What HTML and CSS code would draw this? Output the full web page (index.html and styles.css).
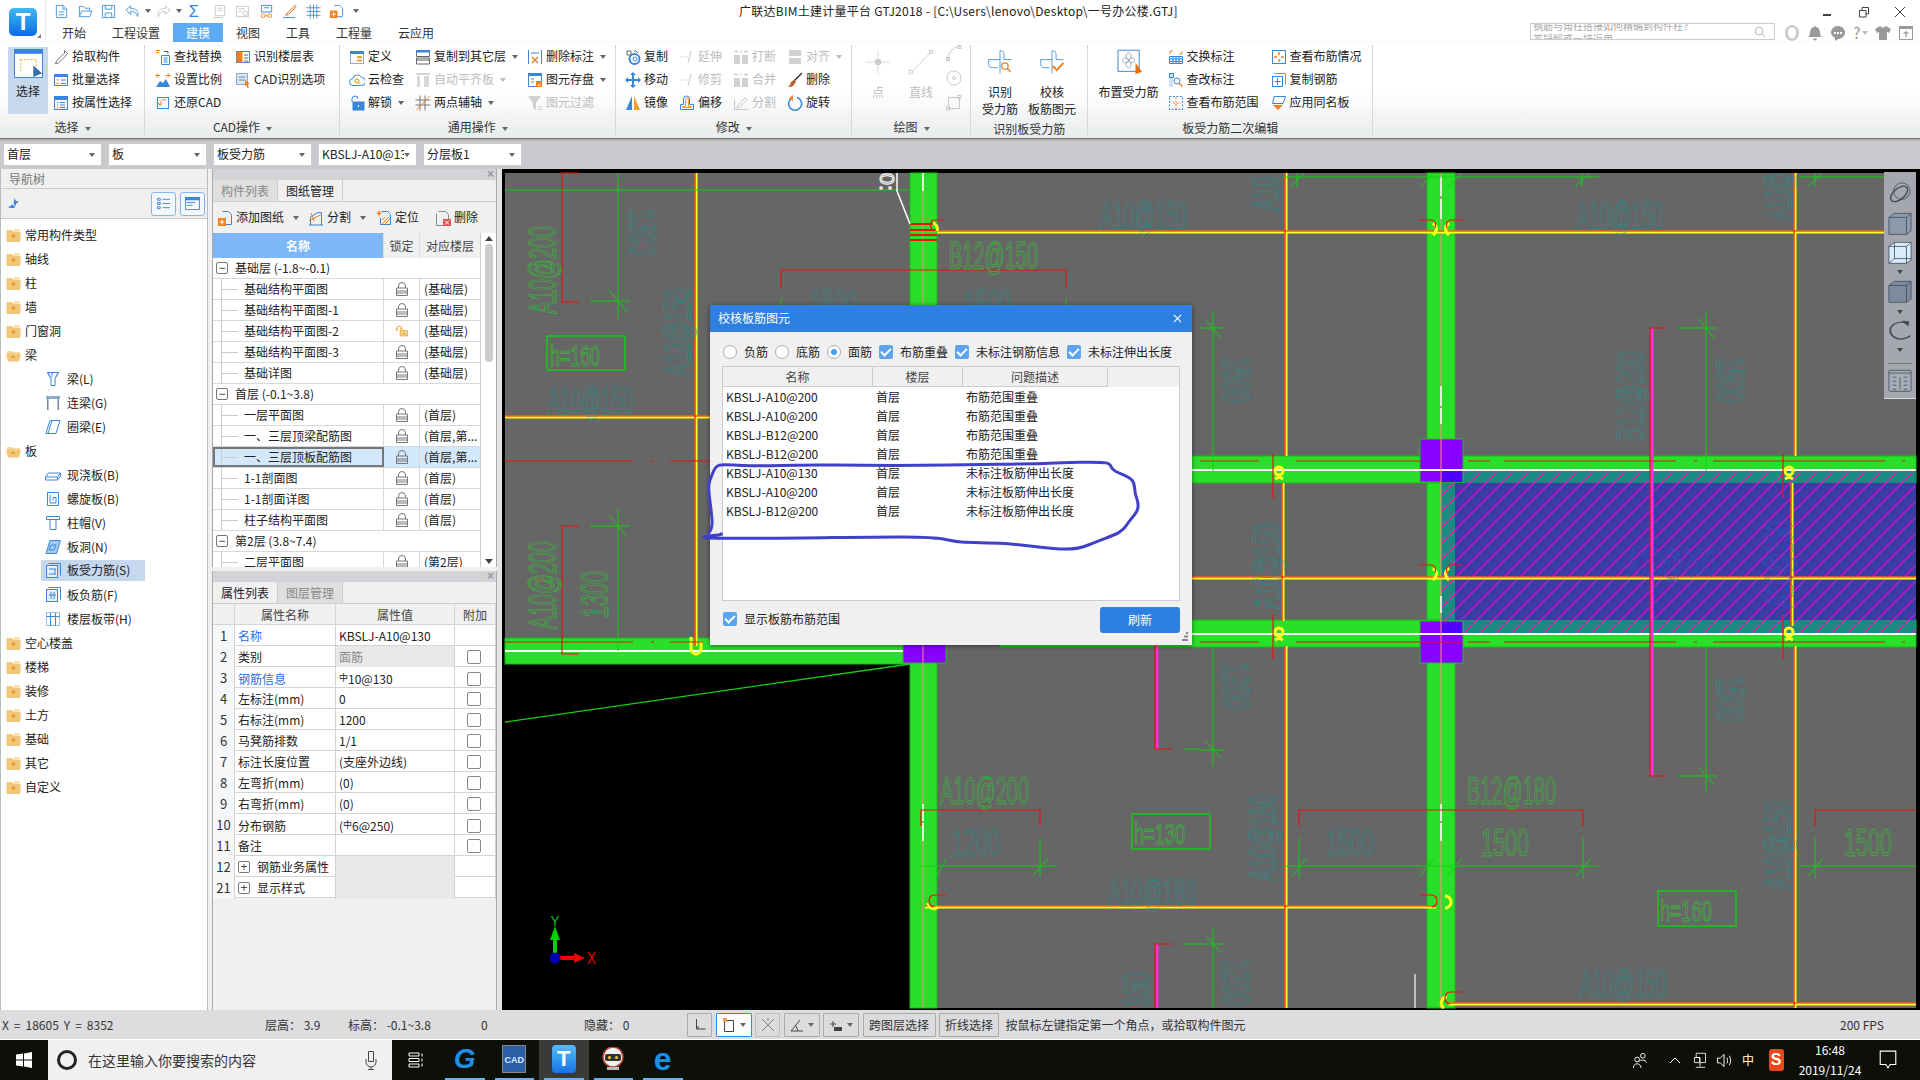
FILE: index.html
```html
<!DOCTYPE html>
<html lang="zh-CN">
<head>
<meta charset="utf-8">
<title>广联达BIM土建计量平台 GTJ2018</title>
<link rel="stylesheet" href="styles.css">
</head>
<body>
<svg class="sprite" xmlns="http://www.w3.org/2000/svg">
  <symbol id="doc" viewBox="0 0 16 16"><path d="M2.500 1.500h7l4 4v9h-11zM9.500 1.500v4h4M5 8.500h6M5 11.500h6"/></symbol>
  <symbol id="folder" viewBox="0 0 16 16"><path d="M1.500 13.500v-11h4l2 2h5v3M1.500 13.500l2.500-6h11l-2.500 6z"/></symbol>
  <symbol id="save" viewBox="0 0 16 16"><path d="M1.500 1.500h13v13h-13zM4.500 1.500v4h7v-4M4.500 14.500v-5h7v5"/></symbol>
  <symbol id="undo" viewBox="0 0 16 16"><path d="M6 2L1 6.500 6 11V8c4 0 6 1 7.500 5.500C15 7.500 12 4.500 6 5z"/></symbol>
  <symbol id="redo" viewBox="0 0 16 16"><path d="M10 2l5 4.500-5 4.500V8c-4 0-6 1-7.500 5.500C1 7.500 4 4.500 10 5z"/></symbol>
  <symbol id="dgdoc" viewBox="0 0 16 16"><path stroke="#c8c8c8" d="M3.500 1.500h10v11h-10zM6 4.500h5M6 7h5M1.500 14.500h10"/></symbol>
  <symbol id="dgfind" viewBox="0 0 16 16"><path stroke="#c8c8c8" d="M1.500 2.500h13v11h-13zM4 5h6M4 8h3"/><circle stroke="#c8c8c8" cx="11" cy="10" r="2.500"/></symbol>
  <symbol id="glass" viewBox="0 0 16 16"><path d="M2.500 1.500h11v7h-11zM5 4h6" stroke="#3a86d8"/><circle cx="4.500" cy="12.500" r="2" stroke="#f08020"/><circle cx="11.500" cy="12.500" r="2" stroke="#f08020"/><path d="M6.500 12.500h3" stroke="#f08020"/></symbol>
  <symbol id="pen" viewBox="0 0 16 16"><path d="M14 1.500L6 9l-2 3 3-1 8-8z" stroke="#e06820"/><path d="M1 14.500h13" stroke="#3a86d8"/></symbol>
  <symbol id="gridq" viewBox="0 0 16 16"><path d="M4.500.500v15M8 .500v15M11.500.500v15M.500 4h15M.500 8h15M.500 12h15"/></symbol>
  <symbol id="docplus" viewBox="0 0 16 16"><path d="M5.500 1.500h6l3 3v9h-6"/><path fill="#f08020" stroke="none" d="M1 7h8v8H1z"/><path stroke="#fff" d="M5 8.500v5M2.500 11h5"/></symbol>
  <symbol id="pick" viewBox="0 0 16 16"><path stroke="#777" d="M11.500 1.500l3 3-1.500 1.500-.5 1-7 7-3 1 1-3 7-7 1-.5z"/></symbol>
  <symbol id="batch" viewBox="0 0 16 16"><rect x="1.500" y="2.500" width="13" height="11"/><path fill="#3a86d8" d="M1.500 2.500h13v2h-13z"/><path stroke="#f08020" d="M3.500 7.500l1 1 1.500-1.500M3.500 11l1 1 1.500-1.500"/><path d="M8 8h5M8 11.500h5"/></symbol>
  <symbol id="attr" viewBox="0 0 16 16"><rect x="1.500" y="1.500" width="13" height="13"/><path fill="#3a86d8" d="M1.500 1.500h13v3h-13z"/><path d="M4 7.500h1M7 7.500h5M4 10h1M7 10h5M4 12.500h1M7 12.500h5"/></symbol>
  <symbol id="findr" viewBox="0 0 16 16"><path stroke="#f08020" d="M1 1.500h4M1 3.500h3"/><path d="M6.500 6.500h8v9h-8zM8.500 9h4M8.500 11h4M8.500 13h4"/><path d="M9 2.500h4v2" stroke="#555"/></symbol>
  <symbol id="scale" viewBox="0 0 16 16"><path stroke="#f08020" d="M1 3.500h4M1 3.500l2-2M1 3.500l2 2M15 3.500h-4M15 3.500l-2-2M15 3.500l-2 2"/><path stroke="none" fill="#3a86d8" d="M1 15l4-6 3 2 3-4 4 8z"/></symbol>
  <symbol id="restore" viewBox="0 0 16 16"><rect x="2.500" y="2.500" width="11" height="11"/><path stroke="#f08020" d="M11 5C7 4 5 6 5 10M3 8l2 2.500L7.500 8"/></symbol>
  <symbol id="floor" viewBox="0 0 16 16"><rect x="1.500" y="2.500" width="13" height="11"/><path fill="#f08020" stroke="#f08020" d="M2 3h5v10H2z"/><path d="M9 6h4M9 9h4M9 12h4" stroke="#666"/></symbol>
  <symbol id="cadopt" viewBox="0 0 16 16"><path stroke="#8aa6c8" fill="#dbe7f5" d="M1.500 1.500h11v11h-11z"/><path stroke="#6b8cb8" d="M3.500 5h7M3.500 8h7"/><path fill="#f08020" stroke="none" d="M10 8l5 4-2.500.500L14 15.500 12.500 16 11 13l-1 1.500z"/></symbol>
  <symbol id="define" viewBox="0 0 16 16"><rect x="1.500" y="2.500" width="13" height="12" stroke="#9ab"/><path fill="#3a86d8" stroke="none" d="M1 2h14v3H1z"/><path fill="#f0a040" stroke="none" d="M8 7h5v2H8zM8 10.500h5v2H8z"/></symbol>
  <symbol id="cloud" viewBox="0 0 16 16"><path d="M4 13.500a3.500 3.500 0 010-7 4.500 4.500 0 018.500-1 3.800 3.800 0 010 8z"/><circle cx="8" cy="9" r="2" stroke="#f08020"/><path d="M9.500 10.500l1.500 1.500" stroke="#f08020"/></symbol>
  <symbol id="unlock" viewBox="0 0 16 16"><path d="M3 7V4a3 3 0 016 0"/><rect x="4" y="7" width="11" height="8" fill="#3a86d8"/><path stroke="#fff" d="M9.500 10v2"/></symbol>
  <symbol id="copylayer" viewBox="0 0 16 16"><path stroke="#666" d="M1.500 1.500h13v6h-13zM1.500 9h13v6h-13z"/><path fill="#3a86d8" stroke="none" d="M1 1h14v2.500H1z"/><path fill="#aaa" stroke="none" d="M2 9.500h12V12H2z"/></symbol>
  <symbol id="dgalign" viewBox="0 0 16 16"><path stroke="none" fill="#d8d8d8" d="M1 1h14v2H1zM2 4h3v11H2zM9 4h5v11H9z"/></symbol>
  <symbol id="twopt" viewBox="0 0 16 16"><path stroke="#777" d="M5 .500v15M10 .500v15M.500 5h15M.500 10h15"/><path stroke="#f08020" d="M1.500 15L14.500 1"/></symbol>
  <symbol id="delmark" viewBox="0 0 16 16"><path stroke="#3a86d8" d="M1.500 1v14M14.500 1v14M4 4h8"/><path stroke="#f08020" stroke-width="1.500" d="M5 8l6 6M11 8l-6 6"/></symbol>
  <symbol id="store" viewBox="0 0 16 16"><path stroke="#3a86d8" d="M1.500 1.500h13v13h-13zM4 7h3M4 10h3"/><path fill="#3a86d8" stroke="none" d="M1 1h14v3H1z"/><path fill="#f08020" stroke="none" d="M9 9h6v6H9z"/><path stroke="#fff" d="M10.500 13h3"/></symbol>
  <symbol id="dgfilter" viewBox="0 0 16 16"><path stroke="none" fill="#d0d0d0" d="M1 1h13L9 8v7l-3-2V8z"/><path stroke="#d0d0d0" d="M11 12h4M11 14.500h4"/></symbol>
  <symbol id="copy" viewBox="0 0 16 16"><circle cx="9.500" cy="10" r="5" stroke="#3a86d8" stroke-width="2"/><circle cx="10" cy="10" r="2" stroke="#3a86d8"/><path d="M2 2h4v4H2zM9 2h2l2 2" stroke="#666"/></symbol>
  <symbol id="move" viewBox="0 0 16 16"><path stroke="none" fill="#3a86d8" d="M8 0l3 3H9v4h4V5l3 3-3 3V9H9v4h2l-3 3-3-3h2V9H3v2L0 8l3-3v2h4V3H5z"/></symbol>
  <symbol id="mirror" viewBox="0 0 16 16"><path stroke="none" fill="#3a86d8" d="M7 1v14H1z"/><path stroke="none" fill="#f0a020" d="M9 1v14h6z"/></symbol>
  <symbol id="dgdash" viewBox="0 0 16 16"><path stroke="#c8c8c8" d="M1 8h1.500M4 8h1.500M7 8h1.500M12 2L9 14"/></symbol>
  <symbol id="dgsplit" viewBox="0 0 16 16"><path stroke="none" fill="#d0d0d0" d="M1 6h6v9H1zM9 6h6v9H9z"/><path stroke="#d0d0d0" d="M3 1v3M8 1v3M13 1v3M1 2.500h4M11 2.500h4"/></symbol>
  <symbol id="dgstack" viewBox="0 0 16 16"><path stroke="none" fill="#d0d0d0" d="M2 1h12v6H2zM2 9h12v6H2z"/></symbol>
  <symbol id="del" viewBox="0 0 16 16"><path stroke="#333" stroke-width="1.500" d="M15 1L7 9"/><path stroke="none" fill="#c06020" d="M7 8l2 2-3 4c-2 1-4 1-5 1 2-1 2-3 3-5z"/></symbol>
  <symbol id="offset" viewBox="0 0 16 16"><path d="M1.500 14.500V9.500h3V4a3 3 0 016 0v5.500h4v5z" stroke="#3a86d8"/><path stroke="#f0a020" d="M3.500 12.500V11.500h3V4.500a1.500 1.500 0 013 0v7h3v1z"/></symbol>
  <symbol id="dgcut" viewBox="0 0 16 16"><path stroke="#c8c8c8" d="M1.500 4.500v10h13M3.500 12.500L12 3l2 2-8 8z"/></symbol>
  <symbol id="rotate" viewBox="0 0 16 16"><path d="M10 2.500a6.500 6.500 0 11-5 .500" stroke="#3a86d8" stroke-width="1.500"/><path stroke="none" fill="#f08020" d="M6 0v6L2 3z"/></symbol>
  <symbol id="dgpoly" viewBox="0 0 16 16"><path stroke="#c8c8c8" d="M2 15C2 8 6 3 14 1"/><rect x="12" y="0.500" width="3" height="3" stroke="#c8c8c8"/><rect x="0.500" y="12.500" width="3" height="3" stroke="#c8c8c8"/></symbol>
  <symbol id="dgcirc" viewBox="0 0 16 16"><circle cx="8" cy="8" r="7" stroke="#c8c8c8"/><circle cx="8" cy="8" r="1.500" stroke="#c8c8c8"/></symbol>
  <symbol id="dgrect" viewBox="0 0 16 16"><path stroke="#c8c8c8" d="M2.500 2.500h11v11h-11z"/><rect x="0.500" y="12" width="3" height="3" stroke="#c8c8c8"/><rect x="12" y="0.500" width="3" height="3" stroke="#c8c8c8"/></symbol>
  <symbol id="swapm" viewBox="0 0 16 16"><path fill="#e8f0fa" d="M1.500 7.500h13v7h-13zM1.500 10h13M1.500 12.500h13M5 7.500v7M8 7.500v7M11 7.500v7"/><path stroke="#f08020" d="M2 5V2h3M14 2v3h-3"/></symbol>
  <symbol id="checkm" viewBox="0 0 16 16"><path fill="#cfe2f7" stroke="none" d="M1 1h4v14H1z"/><rect x="1.500" y="1.500" width="4" height="4"/><circle cx="9" cy="9" r="3"/><path stroke="#f08020" stroke-width="1.500" d="M11 11l3.500 3.500"/></symbol>
  <symbol id="range" viewBox="0 0 16 16"><path stroke-dasharray="2 1.500" d="M1.500 1.500h13v13h-13z"/><path stroke="#f08020" stroke-dasharray="2 1.500" d="M8 2v12M5 8h8"/></symbol>
  <symbol id="viewr" viewBox="0 0 16 16"><rect x="1.500" y="1.500" width="13" height="13"/><path stroke="#f08020" stroke-width="1.500" d="M8 3v3M8 10v3M3 8h3M10 8h3"/></symbol>
  <symbol id="copyr" viewBox="0 0 16 16"><path stroke="#f08020" d="M3.500 1.500h11v11"/><rect x="1.500" y="4.500" width="10" height="10"/><path d="M6.500 6v7M3.500 9.500h6"/></symbol>
  <symbol id="applyb" viewBox="0 0 16 16"><path d="M3 1.500h11.500L12 8.500H1.500z"/><path stroke="none" fill="#f08020" d="M2 10h10l-5 5z"/></symbol>
  <symbol id="nfold" viewBox="0 0 14 13"><path fill="#f2c878" stroke="none" d="M0 2q0-1 1-1h4l1.500 1.500H13q1 0 1 1V12q0 1-1 1H1q-1 0-1-1z"/><path fill="#f8e0a8" stroke="none" d="M7 0h5q1 0 1 1v1H7z"/><path stroke="#e09a30" stroke-width="1.500" d="M5 7h4M7 5v4"/></symbol>
  <symbol id="nopen" viewBox="0 0 16 13"><path fill="#f2d090" stroke="none" d="M1 2h6l1 1h7v2H1z"/><path fill="#f2c878" stroke="none" d="M0 5h16l-2 8H2z"/><path stroke="#d09030" stroke-width="1.500" d="M5.500 8h4"/></symbol>
  <symbol id="sBeam" viewBox="0 0 16 16"><path d="M2.500 1.500h11l-3.500 6v7H6v-7zM2.500 1.500l3.500 6M13.500 1.500l-3.500 6M7 2v4"/></symbol>
  <symbol id="sLink" viewBox="0 0 16 16"><path fill="#8fa9c9" stroke="none" d="M1 1h14v3H1z"/><path stroke="#6f88a8" d="M2.500 4v11M3 4v11M13 4v11M13.500 4v11"/></symbol>
  <symbol id="sRing" viewBox="0 0 16 16"><path d="M5 1.500h10l-4 13H1zM7 1.500l-4 13"/></symbol>
  <symbol id="sSlab" viewBox="0 0 16 16"><path d="M.500 10l3-4h12l-3 4zM.500 10v3h12v-3M12.500 13l3-4V6"/></symbol>
  <symbol id="sSpiral" viewBox="0 0 16 16"><path d="M2.500 1.500h11v13h-11zM5 4v8h6V6.500H8v3"/></symbol>
  <symbol id="sCap" viewBox="0 0 16 16"><path d="M1.500 1.500h13v3h-13zM5 4.500v10h6v-10"/></symbol>
  <symbol id="sHole" viewBox="0 0 16 16"><path fill="#a8c8ee" d="M5 1.500h10.500l-4 13H1zM6 6h5l-2 5H4z"/></symbol>
  <symbol id="sMain" viewBox="0 0 16 16"><rect x="1.500" y="2.500" width="11" height="12" fill="#e2eefa"/><path d="M3.500.500h12v12M4 6h7M10 6v5M4 11h7"/></symbol>
  <symbol id="sNeg" viewBox="0 0 16 16"><rect x="1.500" y="2.500" width="11" height="12" fill="#e2eefa"/><path d="M3.500.500h12v12M4 8h7M6 5v7M9 5v7"/></symbol>
  <symbol id="sBand" viewBox="0 0 16 16"><path stroke-dasharray="1 1" d="M1.500 1.500h13v13h-13z"/><path d="M1.500 5.500h13M5.500 2v13M10.500 2v13"/></symbol>
  <symbol id="lock" viewBox="0 0 12 14"><path stroke="#777" d="M2.500 6V4a3.500 3.500 0 017 0v2M.500 6h11v7.500H.500zM.500 9h11M.500 11h11"/></symbol>
  <symbol id="lockopen" viewBox="0 0 16 14"><path stroke="#f0a030" stroke-width="1.300" d="M1 7V4a3.500 3.500 0 017 0v2M1.500 3v3M6.500 3v3"/><path fill="#f6d27a" stroke="#e0a030" d="M5.500 6.500h10v7h-10z"/><path stroke="#a06020" d="M9.500 10.500h2"/></symbol>
  <symbol id="tadd" viewBox="0 0 16 16"><path stroke="#3a86d8" d="M5.500 1.500h6l3 3v10h-8"/><path fill="#f08020" stroke="none" d="M1 8h8v8H1z"/><path stroke="#fff" d="M5 9.500v5M2.500 12h5"/></symbol>
  <symbol id="tsplit" viewBox="0 0 16 16"><path stroke="#3a86d8" d="M1 15h14M2.500 15V7L10 2.500h3.500V15"/><path stroke="#f08020" d="M1 11l13-7M3 3l3 8"/></symbol>
  <symbol id="tloc" viewBox="0 0 16 16"><path stroke="#3a86d8" d="M5.500 1.500h6l3 3v10h-10V8"/><path fill="#f08020" stroke="none" d="M3 0l1 2.500L6.500 3 4 4 3 7 2 4-.500 3 2 2.500z"/><path stroke="#f08020" d="M6 14l7-7M9 14l5-5M6 10l3-3"/></symbol>
  <symbol id="tdel" viewBox="0 0 16 16"><path stroke="#888" d="M3.500 1.500h7l3 3v10"/><path stroke="#888" d="M1.500 3.500v12h7"/><path fill="#e85050" stroke="none" d="M8 9h8v7H8z"/><path stroke="#fff" d="M10 10.500l4 4M14 10.500l-4 4"/></symbol>
  <symbol id="orbit" viewBox="0 0 26 24"><defs><radialGradient id="ballg" cx=".4" cy=".3"><stop offset="0" stop-color="#fff"/><stop offset="1" stop-color="#6b7685"/></radialGradient></defs><circle cx="15" cy="10" r="9" fill="url(#ballg)" stroke="#4d5867"/><ellipse cx="12" cy="13" rx="11" ry="6" transform="rotate(-40 12 13)" fill="none" stroke="#3f4a59" stroke-width="1.500"/></symbol>
  <symbol id="c3d" viewBox="0 0 26 34" preserveAspectRatio="none"><path fill="#8e99a9" stroke="#3f4a59" d="M1 8l6-6h18v26l-5 5H1z"/><path fill="none" stroke="#3f4a59" d="M1 8h19v25M20 8l5-6"/></symbol>
  <symbol id="cwire" viewBox="0 0 26 34" preserveAspectRatio="none"><path fill="#d8ecfb" stroke="#3f4a59" d="M1 8l6-6h18v26l-5 5H1z"/><path fill="none" stroke="#3f4a59" d="M1 8h19v25M20 8l5-6M7 2v24h18M7 26l-6 7"/></symbol>
  <symbol id="csolid" viewBox="0 0 26 34" preserveAspectRatio="none"><path fill="#7d8b9d" stroke="#3f4a59" d="M1 8l6-6h18v26l-5 5H1z"/><path fill="none" stroke="#3f4a59" d="M1 8h19v25M20 8l5-6"/></symbol>
  <symbol id="crot" viewBox="0 0 26 34" preserveAspectRatio="none"><path fill="none" stroke="#3f4a59" stroke-width="2" d="M20 5A12 13 0 1024 24"/><path fill="#3f4a59" stroke="none" d="M15 1l8 1-1 8z"/></symbol>
  <symbol id="ctable" viewBox="0 0 26 34" preserveAspectRatio="none"><rect x="1" y="2" width="24" height="31" rx="2" fill="#a7aeb8" stroke="#3f4a59"/><path fill="none" stroke="#3f4a59" d="M1 6h24M5 12h4M5 18h4M5 24h4M5 30h4M13 12v18M17 12h4M17 18h4M17 24h4M17 30h4"/></symbol>
</svg>

<div class="app">
  <header class="head">
    <div class="logo-cell"><div class="logo">T</div><i class="logo-corner"></i></div>
    <div class="head-main">
      <div class="qa-row">
        <div class="qa">
          <svg class="qi"><use href="#doc"/></svg>
          <svg class="qi"><use href="#folder"/></svg>
          <svg class="qi"><use href="#save"/></svg>
          <svg class="qi"><use href="#undo"/></svg><i class="caret qc"></i>
          <svg class="qi qd"><use href="#redo"/></svg><i class="caret qc"></i>
          <span class="sigma">Σ</span>
          <svg class="qi"><use href="#dgdoc"/></svg>
          <svg class="qi"><use href="#dgfind"/></svg>
          <svg class="qi"><use href="#glass"/></svg>
          <svg class="qi"><use href="#pen"/></svg>
          <svg class="qi"><use href="#gridq"/></svg>
          <svg class="qi"><use href="#docplus"/></svg><i class="caret qc2"></i>
        </div>
        <div class="app-title">广联达BIM土建计量平台 GTJ2018 - [C:\Users\lenovo\Desktop\一号办公楼.GTJ]</div>
        <div class="winbtns">
          <svg class="wb" viewBox="0 0 12 12"><path d="M1 9h8" stroke-width="2"/></svg>
          <svg class="wb" viewBox="0 0 12 12"><path d="M1.500 4.500h6.500v6.500h-6.500zM4 4.500V1.500h6.500v6.500H8"/></svg>
          <svg class="wb" viewBox="0 0 12 12"><path d="M1 1l10 10M11 1L1 11"/></svg>
        </div>
      </div>
      <div class="tab-row">
        <nav class="tabs">
          <span class="tab">开始</span><span class="tab">工程设置</span><span class="tab on">建模</span><span class="tab">视图</span><span class="tab">工具</span><span class="tab">工程量</span><span class="tab">云应用</span>
        </nav>
        <div class="searchbox">
          <div class="search-txt">钢筋与角柱搭接如何精确到构件柱？<br>答疑解惑一接近用</div>
          <svg class="search-ic" viewBox="0 0 14 14"><circle cx="6" cy="6" r="4.500"/><path d="M9.500 9.500L13 13"/></svg>
        </div>
        <div class="usertools">
          <svg class="ut" viewBox="0 0 16 16"><path fill="#ccc" d="M8 0a6.500 7.500 0 00-7 8c0 4 3 8 7 8s7-4 7-8a6.500 7.500 0 00-7-8z"/><path fill="#fff" d="M8 2.500c-3 0-4 2.500-4 5s1.500 6 4 6 4-3.500 4-6-1-5-4-5z"/></svg>
          <svg class="ut" viewBox="0 0 16 16"><path fill="#999" d="M8 1a1 1 0 011 1c3 .5 4 3 4 6 0 2 1 3 2 4H1c1-1 2-2 2-4 0-3 1-5.500 4-6a1 1 0 011-1zM6 13.500h4a2 2 0 01-4 0z"/></svg>
          <svg class="ut" viewBox="0 0 16 16"><path fill="#999" d="M8 1c4 0 7 3 7 6.500S12 14 8 14l-3 2v-3c-2-1-4-3-4-5.500C1 4 4 1 8 1z"/><path fill="#fff" d="M4 7h2v2H4zM7 7h2v2H7zM10 7h2v2h-2z"/></svg>
          <span class="ut-q">?</span><i class="caret ut-c"></i>
          <svg class="ut" viewBox="0 0 16 16"><path fill="#999" d="M5 1L0 4l2 4 2-1v8h8V7l2 1 2-4-5-3-3 2z"/></svg>
          <svg class="ut" viewBox="0 0 16 16"><path fill="none" stroke="#999" d="M1.500 1.500h13v13h-13z"/><path fill="#999" d="M1 1h14v3H1z"/><path fill="none" stroke="#777" d="M8 12V7M5.500 9L8 6.500 10.500 9"/></svg>
        </div>
      </div>
    </div>
  </header>

  <section class="ribbon">
    <div class="rg g1">
      <div class="rbody">
        <div class="big-select"><svg class="sel-ic" viewBox="0 0 30 30"><rect x=".5" y=".5" width="29" height="29" fill="#fff" stroke="#3a86d8"/><path fill="#3a86d8" d="M0 0h30v5H0z"/><path fill="none" stroke="#f0a040" stroke-dasharray="2 1.500" d="M7 11h16v16"/><path fill="none" stroke="#f0a040" stroke-dasharray="2 1.500" d="M7 11v12"/><path fill="#3a6db0" d="M20 17l9 8-9 4z"/></svg><span>选择</span></div>
        <div class="rc">
          <div class="ri"><svg class="ic"><use href="#pick"/></svg>拾取构件</div>
          <div class="ri"><svg class="ic"><use href="#batch"/></svg>批量选择</div>
          <div class="ri"><svg class="ic"><use href="#attr"/></svg>按属性选择</div>
        </div>
      </div>
      <div class="rlabel">选择<i class="caret"></i></div>
    </div>
    <div class="rg g2">
      <div class="rbody">
        <div class="rc w80">
          <div class="ri"><svg class="ic"><use href="#findr"/></svg>查找替换</div>
          <div class="ri"><svg class="ic"><use href="#scale"/></svg>设置比例</div>
          <div class="ri"><svg class="ic"><use href="#restore"/></svg>还原CAD</div>
        </div>
        <div class="rc">
          <div class="ri"><svg class="ic"><use href="#floor"/></svg>识别楼层表</div>
          <div class="ri"><svg class="ic"><use href="#cadopt"/></svg>CAD识别选项</div>
        </div>
      </div>
      <div class="rlabel">CAD操作<i class="caret"></i></div>
    </div>
    <div class="rg g3">
      <div class="rbody">
        <div class="rc w66">
          <div class="ri"><svg class="ic"><use href="#define"/></svg>定义</div>
          <div class="ri"><svg class="ic"><use href="#cloud"/></svg>云检查</div>
          <div class="ri"><svg class="ic"><use href="#unlock"/></svg>解锁<i class="caret"></i></div>
        </div>
        <div class="rc w112">
          <div class="ri"><svg class="ic"><use href="#copylayer"/></svg>复制到其它层<i class="caret"></i></div>
          <div class="ri dis"><svg class="ic"><use href="#dgalign"/></svg>自动平齐板<i class="caret"></i></div>
          <div class="ri"><svg class="ic"><use href="#twopt"/></svg>两点辅轴<i class="caret"></i></div>
        </div>
        <div class="rc">
          <div class="ri"><svg class="ic"><use href="#delmark"/></svg>删除标注<i class="caret"></i></div>
          <div class="ri"><svg class="ic"><use href="#store"/></svg>图元存盘<i class="caret"></i></div>
          <div class="ri dis"><svg class="ic"><use href="#dgfilter"/></svg>图元过滤</div>
        </div>
      </div>
      <div class="rlabel">通用操作<i class="caret"></i></div>
    </div>
    <div class="rg g4">
      <div class="rbody">
        <div class="rc w54">
          <div class="ri"><svg class="ic"><use href="#copy"/></svg>复制</div>
          <div class="ri"><svg class="ic"><use href="#move"/></svg>移动</div>
          <div class="ri"><svg class="ic"><use href="#mirror"/></svg>镜像</div>
        </div>
        <div class="rc w54">
          <div class="ri dis"><svg class="ic"><use href="#dgdash"/></svg>延伸</div>
          <div class="ri dis"><svg class="ic"><use href="#dgdash"/></svg>修剪</div>
          <div class="ri"><svg class="ic"><use href="#offset"/></svg>偏移</div>
        </div>
        <div class="rc w54">
          <div class="ri dis"><svg class="ic"><use href="#dgsplit"/></svg>打断</div>
          <div class="ri dis"><svg class="ic"><use href="#dgsplit"/></svg>合并</div>
          <div class="ri dis"><svg class="ic"><use href="#dgcut"/></svg>分割</div>
        </div>
        <div class="rc">
          <div class="ri dis"><svg class="ic"><use href="#dgstack"/></svg>对齐<i class="caret"></i></div>
          <div class="ri"><svg class="ic"><use href="#del"/></svg>删除</div>
          <div class="ri"><svg class="ic"><use href="#rotate"/></svg>旋转</div>
        </div>
      </div>
      <div class="rlabel">修改<i class="caret"></i></div>
    </div>
    <div class="rg g5">
      <div class="rbody">
        <div class="bigc dis w36"><svg class="bigi" viewBox="0 0 32 32"><path fill="none" stroke="#d4d4d4" d="M16 1v30M1 16h30"/><circle cx="16" cy="16" r="4" fill="#ccc"/></svg><span>点</span></div>
        <div class="bigc dis w36"><svg class="bigi" viewBox="0 0 32 32"><path fill="none" stroke="#c8c8c8" d="M4 29L29 3"/><rect x="1.500" y="26.500" width="4" height="4" fill="none" stroke="#c8c8c8"/><rect x="26.500" y="1.500" width="4" height="4" fill="none" stroke="#c8c8c8"/></svg><span>直线</span></div>
        <div class="rc3">
          <svg class="ic"><use href="#dgpoly"/></svg>
          <svg class="ic"><use href="#dgcirc"/></svg>
          <svg class="ic"><use href="#dgrect"/></svg>
        </div>
      </div>
      <div class="rlabel">绘图<i class="caret"></i></div>
    </div>
    <div class="rg g6">
      <div class="rbody">
        <div class="bigc w50"><svg class="bigi" viewBox="0 0 32 32"><path fill="none" stroke="#3a86d8" d="M16 2a5 5 0 015 5v6h9M16 2v11H2M2 13v5a5 5 0 005 5h6M16 13v17"/><circle cx="22" cy="21" r="4" fill="none" stroke="#f08020" stroke-width="1.500"/><path stroke="#f08020" stroke-width="2" d="M25 24l4 4"/></svg><span>识别<br>受力筋</span></div>
        <div class="bigc w50"><svg class="bigi" viewBox="0 0 32 32"><path fill="none" stroke="#3a86d8" d="M16 2a5 5 0 015 5v6h9M16 2v11H2M2 13v5a5 5 0 005 5h6M16 13v17"/><path fill="none" stroke="#f08020" stroke-width="2.500" d="M17 21l5 5 8-9"/></svg><span>校核<br>板筋图元</span></div>
      </div>
      <div class="rlabel low">识别板受力筋</div>
    </div>
    <div class="rg g7">
      <div class="rbody">
        <div class="bigc w70"><svg class="bigi wide" viewBox="0 0 34 32"><rect x="3.500" y="1.500" width="26" height="26" fill="#fff" stroke="#3a86d8" stroke-width="1.200"/><path fill="none" stroke="#8b9aa9" d="M16.500 5c-4 0-4 7 0 9 4 2 4 9 0 9s-4-7 0-9c4-2 4-9 0-9zM9 14c0-4 7-4 7.500 0s7.500 4 7.500 0-7-4-7.500 0-7.500 4-7.500 0z"/><path fill="#f07010" d="M25 17l8 11-8 3z"/></svg><span>布置受力筋</span></div>
        <div class="rc w103">
          <div class="ri"><svg class="ic"><use href="#swapm"/></svg>交换标注</div>
          <div class="ri"><svg class="ic"><use href="#checkm"/></svg>查改标注</div>
          <div class="ri"><svg class="ic"><use href="#range"/></svg>查看布筋范围</div>
        </div>
        <div class="rc">
          <div class="ri"><svg class="ic"><use href="#viewr"/></svg>查看布筋情况</div>
          <div class="ri"><svg class="ic"><use href="#copyr"/></svg>复制钢筋</div>
          <div class="ri"><svg class="ic"><use href="#applyb"/></svg>应用同名板</div>
        </div>
      </div>
      <div class="rlabel low">板受力筋二次编辑</div>
    </div>
    <div class="rg-fill"></div>
  </section>

  <section class="combos">
    <div class="combo">首层<i class="caret"></i></div>
    <div class="combo">板<i class="caret"></i></div>
    <div class="combo">板受力筋<i class="caret"></i></div>
    <div class="combo"><span class="clip">KBSLJ-A10@130</span><i class="caret"></i></div>
    <div class="combo">分层板1<i class="caret"></i></div>
  </section>

  <main class="main">
    <aside class="nav">
      <div class="nav-head">导航树</div>
      <div class="nav-tools">
        <svg class="pin" viewBox="0 0 14 14"><path d="M1 11l5-3 3 3-3 1zM8 1l1.500 3L13 5 10 7 9 10 7 7z"/></svg>
        <span class="nav-sq"><svg class="nsq" viewBox="0 0 16 14"><path d="M1.500 1.500h3v2h-3zM1.500 6h3v2h-3zM1.500 10.500h3v2h-3zM7 2.500h8M7 7h8M7 11.500h8"/></svg></span>
        <span class="nav-sq"><svg class="nsq" viewBox="0 0 16 14"><path d="M.500.500h15v13H.500zM2 6h9M2 9h6"/><path class="nsq-f" d="M0 0h16v3.500H0z"/></svg></span>
      </div>
      <div class="tree">
        <div class="tg"><svg class="fo"><use href="#nfold"/></svg>常用构件类型</div>
        <div class="tg"><svg class="fo"><use href="#nfold"/></svg>轴线</div>
        <div class="tg"><svg class="fo"><use href="#nfold"/></svg>柱</div>
        <div class="tg"><svg class="fo"><use href="#nfold"/></svg>墙</div>
        <div class="tg"><svg class="fo"><use href="#nfold"/></svg>门窗洞</div>
        <div class="tg"><svg class="fo"><use href="#nopen"/></svg>梁</div>
        <div class="ts"><svg class="ic"><use href="#sBeam"/></svg>梁(L)</div>
        <div class="ts"><svg class="ic"><use href="#sLink"/></svg>连梁(G)</div>
        <div class="ts"><svg class="ic"><use href="#sRing"/></svg>圈梁(E)</div>
        <div class="tg"><svg class="fo"><use href="#nopen"/></svg>板</div>
        <div class="ts"><svg class="ic"><use href="#sSlab"/></svg>现浇板(B)</div>
        <div class="ts"><svg class="ic"><use href="#sSpiral"/></svg>螺旋板(B)</div>
        <div class="ts"><svg class="ic"><use href="#sCap"/></svg>柱帽(V)</div>
        <div class="ts"><svg class="ic"><use href="#sHole"/></svg>板洞(N)</div>
        <div class="ts sel"><svg class="ic"><use href="#sMain"/></svg>板受力筋(S)</div>
        <div class="ts"><svg class="ic"><use href="#sNeg"/></svg>板负筋(F)</div>
        <div class="ts"><svg class="ic"><use href="#sBand"/></svg>楼层板带(H)</div>
        <div class="tg"><svg class="fo"><use href="#nfold"/></svg>空心楼盖</div>
        <div class="tg"><svg class="fo"><use href="#nfold"/></svg>楼梯</div>
        <div class="tg"><svg class="fo"><use href="#nfold"/></svg>装修</div>
        <div class="tg"><svg class="fo"><use href="#nfold"/></svg>土方</div>
        <div class="tg"><svg class="fo"><use href="#nfold"/></svg>基础</div>
        <div class="tg"><svg class="fo"><use href="#nfold"/></svg>其它</div>
        <div class="tg"><svg class="fo"><use href="#nfold"/></svg>自定义</div>
      </div>
    </aside>

    <div class="mid">
      <section class="panel p1">
        <div class="p-head"><span class="p-x">×</span></div>
        <div class="p-tabs"><span class="p-tab">构件列表</span><span class="p-tab on">图纸管理</span></div>
        <div class="p-tools">
          <svg class="ic"><use href="#tadd"/></svg><span class="pt t1">添加图纸</span><i class="caret"></i>
          <svg class="ic i2"><use href="#tsplit"/></svg><span class="pt t2">分割</span><i class="caret"></i>
          <svg class="ic i3"><use href="#tloc"/></svg><span class="pt t2">定位</span>
          <svg class="ic i4"><use href="#tdel"/></svg><span class="pt t2">删除</span>
        </div>
        <div class="dwg">
          <div class="dwg-list">
            <div class="dh"><span class="dh-n">名称</span><span>锁定</span><span>对应楼层</span></div>
            <div class="dg"><i class="box">−</i>基础层 (-1.8~-0.1)</div>
            <div class="dr"><span class="dn">基础结构平面图</span><span class="dl"><svg class="lk"><use href="#lock"/></svg></span><span class="df">(基础层)</span></div>
            <div class="dr"><span class="dn">基础结构平面图-1</span><span class="dl"><svg class="lk"><use href="#lock"/></svg></span><span class="df">(基础层)</span></div>
            <div class="dr"><span class="dn">基础结构平面图-2</span><span class="dl"><svg class="lk"><use href="#lockopen"/></svg></span><span class="df">(基础层)</span></div>
            <div class="dr"><span class="dn">基础结构平面图-3</span><span class="dl"><svg class="lk"><use href="#lock"/></svg></span><span class="df">(基础层)</span></div>
            <div class="dr"><span class="dn">基础详图</span><span class="dl"><svg class="lk"><use href="#lock"/></svg></span><span class="df">(基础层)</span></div>
            <div class="dg"><i class="box">−</i>首层 (-0.1~3.8)</div>
            <div class="dr"><span class="dn">一层平面图</span><span class="dl"><svg class="lk"><use href="#lock"/></svg></span><span class="df">(首层)</span></div>
            <div class="dr"><span class="dn">一、三层顶梁配筋图</span><span class="dl"><svg class="lk"><use href="#lock"/></svg></span><span class="df">(首层,第...</span></div>
            <div class="dr act"><span class="dn">一、三层顶板配筋图</span><span class="dl"><svg class="lk"><use href="#lock"/></svg></span><span class="df">(首层,第...</span></div>
            <div class="dr"><span class="dn">1-1剖面图</span><span class="dl"><svg class="lk"><use href="#lock"/></svg></span><span class="df">(首层)</span></div>
            <div class="dr"><span class="dn">1-1剖面详图</span><span class="dl"><svg class="lk"><use href="#lock"/></svg></span><span class="df">(首层)</span></div>
            <div class="dr"><span class="dn">柱子结构平面图</span><span class="dl"><svg class="lk"><use href="#lock"/></svg></span><span class="df">(首层)</span></div>
            <div class="dg"><i class="box">−</i>第2层 (3.8~7.4)</div>
            <div class="dr"><span class="dn">二层平面图</span><span class="dl"><svg class="lk"><use href="#lock"/></svg></span><span class="df">(第2层)</span></div>
          </div>
          <div class="vscroll"><i class="up"></i><i class="thumb"></i><i class="down"></i></div>
        </div>
      </section>
      <section class="panel p2">
        <div class="p-head"><span class="p-x">×</span></div>
        <div class="p-tabs"><span class="p-tab on">属性列表</span><span class="p-tab">图层管理</span></div>
        <div class="props">
          <div class="prh"><span></span><span>属性名称</span><span>属性值</span><span>附加</span></div>
          <div class="pr"><span class="pi">1</span><span class="pk lnk">名称</span><span class="pv">KBSLJ-A10@130</span><span class="pc"></span></div>
          <div class="pr"><span class="pi">2</span><span class="pk">类别</span><span class="pv ro">面筋</span><span class="pc"><i class="chk"></i></span></div>
          <div class="pr"><span class="pi">3</span><span class="pk lnk">钢筋信息</span><span class="pv"><span class="rb">中</span>10@130</span><span class="pc"><i class="chk"></i></span></div>
          <div class="pr"><span class="pi">4</span><span class="pk">左标注(mm)</span><span class="pv">0</span><span class="pc"><i class="chk"></i></span></div>
          <div class="pr"><span class="pi">5</span><span class="pk">右标注(mm)</span><span class="pv">1200</span><span class="pc"><i class="chk"></i></span></div>
          <div class="pr"><span class="pi">6</span><span class="pk">马凳筋排数</span><span class="pv">1/1</span><span class="pc"><i class="chk"></i></span></div>
          <div class="pr"><span class="pi">7</span><span class="pk">标注长度位置</span><span class="pv">(支座外边线)</span><span class="pc"><i class="chk"></i></span></div>
          <div class="pr"><span class="pi">8</span><span class="pk">左弯折(mm)</span><span class="pv">(0)</span><span class="pc"><i class="chk"></i></span></div>
          <div class="pr"><span class="pi">9</span><span class="pk">右弯折(mm)</span><span class="pv">(0)</span><span class="pc"><i class="chk"></i></span></div>
          <div class="pr"><span class="pi">10</span><span class="pk">分布钢筋</span><span class="pv">(<span class="rb">中</span>6@250)</span><span class="pc"><i class="chk"></i></span></div>
          <div class="pr"><span class="pi">11</span><span class="pk">备注</span><span class="pv"></span><span class="pc"><i class="chk"></i></span></div>
          <div class="pr"><span class="pi">12</span><span class="pk"><i class="box plus">+</i>钢筋业务属性</span><span class="pv ro"></span><span class="pc"></span></div>
          <div class="pr"><span class="pi">21</span><span class="pk"><i class="box plus">+</i>显示样式</span><span class="pv ro"></span><span class="pc"></span></div>
        </div>
      </section>
    </div>
    <div class="split"></div>

    <div class="canvas">
      <svg class="cad" viewBox="502 168 1418 842" width="1418" height="842" xmlns="http://www.w3.org/2000/svg">
        <defs>
          <pattern id="hatch" width="16" height="16" patternUnits="userSpaceOnUse"><path class="hl" d="M-2 18L18-2M-2 2L2-2M14 18L18 14"/></pattern>
          <g id="hk"><path class="yh" d="M1433 222q7 6 0 12M1449 222q-7 6 0 12"/><path class="rn" d="M1419 219h13q5 2 3 8M1463 219h-13q-5 2-3 8"/></g>
          <g id="hs"><path class="yh" d="M1275 470a4 4 0 118 0 4 4 0 11-8 0M1275 478l4-2 4 2"/><path class="rn" d="M1273 453v44"/></g>
        </defs>
        <rect class="paper" x="505" y="172" width="1411" height="835"/>
        <rect class="void" x="505" y="663" width="405" height="344"/>
        <g class="wall">
          <rect x="910" y="172" width="27" height="835"/>
          <rect x="1427" y="172" width="28" height="835"/>
          <rect x="1000" y="455" width="916" height="27"/>
          <rect x="1000" y="619" width="916" height="27"/>
          <rect x="505" y="637" width="405" height="26"/>
        </g>
        <rect class="blue" x="1455" y="482" width="461" height="137"/>
        <g class="teal"><rect x="1441" y="470" width="475" height="12"/><rect x="1441" y="619" width="475" height="14"/><rect x="1441" y="482" width="14" height="137"/></g>
        <rect class="hatch" x="1441" y="470" width="475" height="163"/>
        <g class="col">
          <rect x="1420" y="438" width="43" height="43"/><rect x="1420" y="620" width="43" height="42"/><rect x="903" y="630" width="43" height="32"/>
        </g>
        <g class="colb"><rect x="1441" y="470" width="21" height="11"/><rect x="1441" y="621" width="21" height="12"/></g>
        <path class="wl" d="M505 650H903M1000 469H1916M1000 633H1916"/>
        <path class="pk-l" d="M923 172V1007M1441 172V1007"/>
        <path class="wd" d="M923 172V190M923 803V820M923 822V840M1441 175V195M1441 198V218M1441 385V405M1441 407V423M1441 595V612M1441 803V820M1441 822V840"/>
        <path class="ybar" d="M937 231H1916M505 416H710M1100 577H1916M925 906H1436M1448 1003H1916M696 172V645M1286 172V455M1283 482V620M1286 645V1007M1795 172V455M1792 482V625M1795 645V1007"/>
        <path class="rbar" d="M937 230H1916M505 415H710M1100 576H1916M925 905H1436M1448 1002H1916M695 172V645M1285 172V455M1282 482V620M1285 645V1007M1794 172V455M1791 482V625M1794 645V1007"/>
        <path class="ubar" d="M691 636V648a5 5 0 0010 0V640"/>
        <path class="rred" d="M910 223H937M910 229H937M910 234H937M910 239H937"/>
        <path class="mg" d="M1652 327V775M1157 645V748M1157 943V1007"/>
        <path class="red" d="M579 172H562V301H579M579 525H562V653H579M781 287V269H1066V287M921 825V809H1040V825M1299 825V809H1583V825M1916 809H1815V825M1666 327H1650V775H1666M1172 748H1155V645M1172 943H1155V1007M505 460H633M651 460H654M670 460H710M505 641H633M651 641H654M670 641H703M1200 460H1259M1296 460H1420M1468 460H1490M1504 460H1676M1694 460H1697M1713 460H1885M1902 460H1905M1200 641H1259M1296 641H1420M1420 641H1463M1468 641H1490M1504 641H1676M1694 641H1697M1713 641H1885M1902 641H1905"/>
        <path class="grn" d="M505 189H910M618 172V318M590 300H630M609 289L627 311M618 508V650M590 525H630M609 514L627 536M781 298V305M1066 298V305M1283 176H1599M1297 172V186M1290 186L1304 172M1582 172V186M1575 186L1589 172M1420 186L1434 172M1448 186L1462 172M1800 176H1885M1815 172V186M1808 186L1822 172M1213 310V470M1200 327H1224M1205 318L1221 337M1706 310V470M1678 327H1717M1698 317L1714 337M1213 645V765M1200 749H1224M1205 740L1221 757M1213 926V1007M1200 943H1224M1205 934L1221 952M1706 645V791M1678 775H1717M1698 766L1714 783M920 865H1057M1040 837V876M1033 875L1048 857M937 875L946 858M1283 865H1599M1299 837V877M1292 875L1307 857M1583 837V877M1576 875L1591 857M1420 875L1434 857M1447 875L1462 857M1800 865H1916M1815 837V877M1808 875L1823 857M1184 748H1200M1184 943H1200"/>
        <path class="grn2" d="M505 721L910 663"/>
        <rect class="gbox" x="547" y="335" width="78" height="34"/>
        <rect class="gbox" x="1132" y="813" width="78" height="35"/>
        <rect class="gbox" x="1658" y="890" width="78" height="35"/>
        <use href="#hk"/><use href="#hk" y="345"/>
        <use href="#hs"/><use href="#hs" y="161"/><use href="#hs" x="510"/><use href="#hs" x="510" y="161"/>
        <path class="yh" d="M937 230a5 6 0 00-4-8M928 902a6 6 0 0010 4M1445 895a6 6 0 010 12M1447 996a6 6 0 00-3 11"/>
        <path class="rn" d="M944 219H934a4 5 0 00-2 9M946 894H934a5 6 0 000 12M1420 894H1432a5 6 0 010 12M1463 991H1450a5 6 0 000 12"/>
        <path class="wt" d="M897 172V190L910 223"/>
        <path class="wt2" d="M1415 973V1007"/>
        <text class="ct wtxt" transform="translate(880 172) rotate(90)" textLength="18" lengthAdjust="spacingAndGlyphs">0:</text>

        <g class="ct teal-t">
          <text transform="translate(629 208) rotate(90)" textLength="47" lengthAdjust="spacingAndGlyphs">1300</text>
          <text transform="translate(691 375) rotate(-90)" textLength="87" lengthAdjust="spacingAndGlyphs">A10@150</text>
          <text x="547" y="413" textLength="86" lengthAdjust="spacingAndGlyphs">A10@150</text>
          <text x="810" y="316" textLength="47" lengthAdjust="spacingAndGlyphs">1500</text>
          <text x="964" y="316" textLength="47" lengthAdjust="spacingAndGlyphs">1500</text>
          <text x="1100" y="228" textLength="87" lengthAdjust="spacingAndGlyphs">A10@150</text>
          <text transform="translate(1279 210) rotate(-90)" textLength="35" lengthAdjust="spacingAndGlyphs">A10</text>
          <text transform="translate(1792 219) rotate(-90)" textLength="47" lengthAdjust="spacingAndGlyphs">A10@</text>
          <text x="1576" y="228" textLength="88" lengthAdjust="spacingAndGlyphs">A10@150</text>
          <text transform="translate(1223 356) rotate(90)" textLength="46" lengthAdjust="spacingAndGlyphs">1500</text>
          <text transform="translate(1717 356) rotate(90)" textLength="46" lengthAdjust="spacingAndGlyphs">1500</text>
          <text transform="translate(1644 440) rotate(-90)" textLength="90" lengthAdjust="spacingAndGlyphs">B12@200</text>
          <text transform="translate(1280 608) rotate(-90)" textLength="86" lengthAdjust="spacingAndGlyphs">A10@150</text>
          <text x="952" y="855" textLength="48" lengthAdjust="spacingAndGlyphs">1200</text>
          <text x="1108" y="905" textLength="88" lengthAdjust="spacingAndGlyphs">A10@180</text>
          <text transform="translate(1223 662) rotate(90)" textLength="46" lengthAdjust="spacingAndGlyphs">1200</text>
          <text transform="translate(1223 958) rotate(90)" textLength="47" lengthAdjust="spacingAndGlyphs">1200</text>
          <text transform="translate(1276 880) rotate(-90)" textLength="87" lengthAdjust="spacingAndGlyphs">A10@180</text>
          <text x="1326" y="855" textLength="48" lengthAdjust="spacingAndGlyphs">1500</text>
          <text x="1579" y="996" textLength="88" lengthAdjust="spacingAndGlyphs">A10@150</text>
          <text transform="translate(1791 888) rotate(-90)" textLength="88" lengthAdjust="spacingAndGlyphs">A10@150</text>
          <text transform="translate(1717 675) rotate(90)" textLength="46" lengthAdjust="spacingAndGlyphs">1500</text>
          <text transform="translate(1150 1006) rotate(-90)" textLength="35" lengthAdjust="spacingAndGlyphs">130</text>
        </g>
        <g class="ct blue-t">
          <text x="1627" y="575" textLength="89" lengthAdjust="spacingAndGlyphs">A10@200</text>
          <text transform="translate(1792 607) rotate(-90)" textLength="87" lengthAdjust="spacingAndGlyphs">A10@150</text>
        </g>
        <g class="ct green-t">
          <text transform="translate(556 313) rotate(-90)" textLength="88" lengthAdjust="spacingAndGlyphs">A10@200</text>
          <text transform="translate(556 628) rotate(-90)" textLength="88" lengthAdjust="spacingAndGlyphs">A10@200</text>
          <text transform="translate(608 617) rotate(-90)" textLength="47" lengthAdjust="spacingAndGlyphs">1300</text>
          <text x="949" y="268" textLength="89" lengthAdjust="spacingAndGlyphs">B12@150</text>
          <text x="940" y="803" textLength="89" lengthAdjust="spacingAndGlyphs">A10@200</text>
          <text x="1467" y="803" textLength="89" lengthAdjust="spacingAndGlyphs">B12@180</text>
          <text x="1481" y="855" textLength="48" lengthAdjust="spacingAndGlyphs">1500</text>
          <text x="1844" y="855" textLength="48" lengthAdjust="spacingAndGlyphs">1500</text>
        </g>
        <g class="ct green-s">
          <text x="550" y="365" textLength="50" lengthAdjust="spacingAndGlyphs">h=160</text>
          <text x="1134" y="843" textLength="51" lengthAdjust="spacingAndGlyphs">h=130</text>
          <text x="1660" y="920" textLength="52" lengthAdjust="spacingAndGlyphs">h=160</text>
        </g>
        <path class="ax-g" d="M555 957V938"/><path class="ax-gf" d="M555 925l5 14h-10z"/>
        <path class="ax-r" d="M555 957H575"/><path class="ax-rf" d="M585 957l-11-5v10z"/>
        <circle class="ax-b" cx="555" cy="957" r="5.500"/>
        <text class="ax-yt" x="555" y="925" textLength="9" lengthAdjust="spacingAndGlyphs">Y</text>
        <text class="ax-xt" x="587" y="963" textLength="9" lengthAdjust="spacingAndGlyphs">X</text>
      </svg>
      <div class="viewbar">
        <svg class="vb v1"><use href="#orbit"/></svg>
        <svg class="vb v2"><use href="#c3d"/></svg>
        <svg class="vb v3"><use href="#cwire"/></svg><i class="caret c1"></i>
        <svg class="vb"><use href="#csolid"/></svg><i class="caret c2"></i>
        <svg class="vb v5"><use href="#crot"/></svg><i class="caret c1"></i>
        <hr class="vsep">
        <svg class="vb"><use href="#ctable"/></svg>
      </div>
    </div>

    <div class="dlg">
      <div class="dlg-title"><span>校核板筋图元</span><svg class="dlg-x" viewBox="0 0 10 10"><path d="M1 1l8 8M9 1L1 9"/></svg></div>
      <div class="dlg-opts">
        <i class="rd"></i><span class="op">负筋</span>
        <i class="rd"></i><span class="op">底筋</span>
        <i class="rd on"></i><span class="op">面筋</span>
        <i class="cb"></i><span class="op">布筋重叠</span>
        <i class="cb"></i><span class="op">未标注钢筋信息</span>
        <i class="cb"></i><span class="op">未标注伸出长度</span>
      </div>
      <div class="dlg-table">
        <div class="dt-h"><span>名称</span><span>楼层</span><span>问题描述</span></div>
        <div class="dt-r"><span>KBSLJ-A10@200</span><span>首层</span><span>布筋范围重叠</span></div>
        <div class="dt-r"><span>KBSLJ-A10@200</span><span>首层</span><span>布筋范围重叠</span></div>
        <div class="dt-r"><span>KBSLJ-B12@200</span><span>首层</span><span>布筋范围重叠</span></div>
        <div class="dt-r"><span>KBSLJ-B12@200</span><span>首层</span><span>布筋范围重叠</span></div>
        <div class="dt-r"><span>KBSLJ-A10@130</span><span>首层</span><span>未标注板筋伸出长度</span></div>
        <div class="dt-r"><span>KBSLJ-A10@200</span><span>首层</span><span>未标注板筋伸出长度</span></div>
        <div class="dt-r"><span>KBSLJ-B12@200</span><span>首层</span><span>未标注板筋伸出长度</span></div>
      </div>
      <div class="dlg-foot">
        <i class="cb"></i><span class="op">显示板筋布筋范围</span>
        <button class="refresh" type="button">刷新</button>
      </div>
      <svg class="scribble" viewBox="0 0 1500 1080"><path d="M25 715C40 700 38 680 30 620S28 560 40 530 65 510 150 512 250 508 400 510 700 512 900 508 1000 505 1140 502 1200 512 1260 535 1295 570 1310 610 1298 660 1280 690 1230 722 1165 750 1020 750 900 745 790 745 730 732 400 730 140 730 100 720 60 716 25 715z"/></svg>
      <svg class="grip" viewBox="0 0 6 9"><path d="M4 0h2v2H4zM2 3.500h2v2H2zM4 3.500h2v2H4zM0 7h2v2H0zM2 7h2v2H2zM4 7h2v2H4z"/></svg>
    </div>
  </main>

  <footer class="status">
    <div class="st-cells"><span class="st-xy">X = 18605 Y = 8352</span><span>层高： 3.9</span><span>标高： -0.1~3.8</span><span>0</span><span>隐藏： 0</span></div>
    <div class="st-b s25"><svg class="si" viewBox="0 0 14 14"><path d="M3.500 1v10h9M5 11V8"/></svg></div>
    <div class="st-b s36 on"><svg class="si" viewBox="0 0 14 14"><path d="M2.500 2.500h9v11h-9z"/><path class="si-o" d="M1 0h4v4H1z"/></svg><i class="caret"></i></div>
    <div class="st-b s25 off"><svg class="si" viewBox="0 0 14 14"><path d="M1 1l12 12M13 1L1 13M7 0v3"/></svg></div>
    <div class="st-b s36"><svg class="si" viewBox="0 0 14 14"><path d="M1 13h12M1 13L10 2M6 8l2 5"/></svg><i class="caret"></i></div>
    <div class="st-b s36"><svg class="si" viewBox="0 0 14 14"><path d="M1 6h6M4 3v6"/><path class="si-d" d="M5 9h8v4H5z"/></svg><i class="caret"></i></div>
    <div class="st-b s73">跨图层选择</div>
    <div class="st-b s60">折线选择</div>
    <span class="st-msg">按鼠标左键指定第一个角点，或拾取构件图元</span>
    <span class="st-fps">200 FPS</span>
  </footer>

  <footer class="taskbar">
    <div class="tb-start"><svg class="winlogo" viewBox="0 0 16 16"><path d="M0 2.500L7 1.500V7.500H0zM8 1.400L16 0V7.500H8zM0 8.500H7V14.500L0 13.500zM8 8.500H16V16L8 14.600z"/></svg></div>
    <div class="tb-search">
      <i class="cortana"></i><span class="tb-ph">在这里输入你要搜索的内容</span>
      <svg class="mic" viewBox="0 0 12 20"><path d="M3.500 1.500h5v10h-5zM1 9v3a5 5 0 0010 0V9M6 17v3M3 19.500h6"/></svg>
    </div>
    <div class="tb-view"><svg class="tv" viewBox="0 0 16 16"><path d="M1 1h10v3H1zM1 6.500h10v3H1zM1 12h10v3H1zM14 1.500v3M14 6.500v3M14 11.500v3"/></svg></div>
    <div class="tb-app ul"><span class="g-ic">G</span></div>
    <div class="tb-app ul"><span class="cad-ic">CAD</span></div>
    <div class="tb-app ul act"><span class="t-ic">T</span></div>
    <div class="tb-app ul"><svg class="robot" viewBox="0 0 22 24"><circle cx="11" cy="10" r="10" fill="#f0f0f0" stroke="#c04030" stroke-width="1.500"/><rect x="3" y="7" width="16" height="7" rx="2" fill="#333"/><circle cx="7.500" cy="10.500" r="1.500" fill="#f0d040"/><circle cx="14.500" cy="10.500" r="1.500" fill="#f0d040"/><path d="M5 20h12v3H5z" fill="#bbb"/></svg></div>
    <div class="tb-app ul"><span class="e-ic">e</span></div>
    <div class="tray">
      <svg class="tr t36" viewBox="0 0 18 18"><circle cx="12" cy="4" r="2.500"/><path d="M8 10c1-2 7-2 8 1"/><circle cx="6" cy="8" r="2.500"/><path d="M2 17c0-6 8-6 8 0"/></svg>
      <svg class="tr t34 chev" viewBox="0 0 12 8"><path d="M1 7l5-5 5 5"/></svg>
      <svg class="tr t16" viewBox="0 0 16 20"><path d="M3.500 1.500h11v11H8v-6H3.500zM1.500 6.500h6v6h-6zM8 13v4M3 18h11"/></svg>
      <svg class="tr t34" viewBox="0 0 18 18"><path d="M1 6.500h3l4-4v13l-4-4H1zM11 6c1 2 1 4 0 6M13.500 4c2 3 2 7 0 10"/></svg>
      <span class="tr-zh">中</span>
      <span class="tr-s"><b>S</b></span>
      <div class="tr-time"><span>16:48</span><span>2019/11/24</span></div>
      <svg class="tr t52" viewBox="0 0 16 18"><path d="M1 1h14v12H10l-2 3-2-3H1z"/></svg>
    </div>
  </footer>
</div>
</body>
</html>
```
FILE: styles.css
```css
* { box-sizing: border-box; }
html, body { margin: 0; padding: 0; width: 1920px; height: 1080px; overflow: hidden; }
body { font: 12px/1.2 "Noto Sans CJK SC", "Noto Sans", sans-serif; color: #222; background: #fff; }
.sprite { display: none; }
i { font-style: normal; }
.app { width: 1920px; height: 1080px; display: flex; flex-direction: column; position: relative; }
.caret { display: inline-block; width: 0; height: 0; border: 3px solid transparent; border-top: 4px solid #666; border-bottom: 0; margin-left: 6px; vertical-align: middle; }

/* head */
.head { height: 42px; display: flex; flex: none; background: #fff; }
.logo-cell { width: 46px; padding: 8px 0 0 9px; display: flex; border-right: 1px solid #e8e8e8; }
.logo { width: 28px; height: 28px; border-radius: 5px; background: linear-gradient(#42b8f4, #0a6de0); color: #fff; font: bold 24px/28px "Liberation Sans", sans-serif; text-align: center; }
.logo-corner { width: 0; height: 0; margin: 26px 0 0 0; border-left: 4px solid transparent; border-bottom: 4px solid #777; }
.head-main { flex: 1; display: flex; flex-direction: column; }
.qa-row { height: 23px; display: flex; align-items: center; }
.qa { width: 693px; padding-left: 8px; display: flex; align-items: center; padding-bottom: 1px; }
.qi { width: 15px; height: 15px; margin-right: 8.500px; fill: none; stroke: #4a94dc; }
.qd { stroke: #c8c8c8; margin-left: 0; }
.qc { margin: 0 4.500px 0 -3px; border-top-color: #666; }
.qc2 { margin: 0 0 0 0; }
.sigma { width: 15px; margin-left: 2px; margin-right: 8px; color: #3a86d8; font: 17px/15px "Liberation Sans", sans-serif; }
.app-title { width: 441px; white-space: nowrap; color: #222; letter-spacing: .27px; }
.winbtns { margin-left: auto; display: flex; align-items: center; gap: 24px; padding-right: 14px; }
.wb { width: 12px; height: 12px; fill: none; stroke: #444; }
.tab-row { flex: 1; display: flex; align-items: stretch; }
.tabs { display: flex; padding-left: 3px; }
.tab { padding: 0 13px; line-height: 19px; color: #333; }
.tab.on { background: #5eabf5; color: #fff; }
.searchbox { margin-left: auto; margin-bottom: 2px; width: 245px; height: 17px; border: 1px solid #ccc; display: flex; align-items: center; overflow: hidden; }
.search-txt { flex: 1; font-size: 10px; line-height: 13px; color: #aaa; padding-left: 2px; white-space: nowrap; }
.search-ic { width: 12px; height: 12px; margin-right: 8px; fill: none; stroke: #aaa; flex: none; }
.usertools { width: 145px; display: flex; align-items: center; padding-left: 9px; }
.ut { width: 16px; height: 16px; margin-right: 7px; flex: none; }
.ut-q { width: 9px; color: #999; font-size: 16px; line-height: 17px; margin-right: 0; }
.ut-c { margin: 0 7px 0 1px; border-top-color: #bbb; }

/* ribbon */
.ribbon { height: 97px; flex: none; display: flex; background: linear-gradient(#fff 0, #fff 50%, #e9ecec 100%); border-bottom: 1px solid #777; box-shadow: 0 1px 2px #999; position: relative; }
.rg { display: flex; flex-direction: column; position: relative; padding-top: 3px; }
.rg::after { content: ""; position: absolute; right: 0; top: 3px; bottom: 2px; width: 1px; background: #d8d8d8; }
.g1 { width: 145px; } .g2 { width: 195px; } .g3 { width: 275.500px; } .g4 { width: 236.500px; } .g5 { width: 119px; } .g6 { width: 116.500px; } .g7 { width: 285.500px; }
.rg-fill { flex: 1; }
.rbody { height: 73px; display: flex; }
.g1 .rbody { padding-left: 8px; } .g2 .rbody { padding-left: 10px; } .g3 .rbody { padding-left: 9px; } .g4 .rbody { padding-left: 9.500px; }
.g5 .rbody { padding-left: 8px; gap: 7px; } .g6 .rbody { padding-left: 4px; gap: 2px; } .g7 .rbody { padding-left: 6px; }
.rc { display: flex; flex-direction: column; }
.g1 .rc { margin-left: 5px; }
.g7 .rc.w103 { margin-left: 4px; }
.w80 { width: 80px; } .w66 { width: 66px; } .w112 { width: 112px; } .w54 { width: 54px; } .w36 { width: 36px; } .w50 { width: 50px; } .w70 { width: 70px; } .w103 { width: 103px; }
.ri { height: 23px; display: flex; align-items: center; white-space: nowrap; color: #222; }
.ic { width: 16px; height: 16px; margin-right: 3px; flex: none; fill: none; stroke: #3a86d8; }
.dis { color: #bdbdbd; }
.dis .caret { border-top-color: #bbb; }
.big-select { width: 40px; height: 67px; margin-top: 2px; background: #c5d8ee; display: flex; flex-direction: column; align-items: center; padding-top: 2px; }
.sel-ic { width: 29px; height: 29px; margin-bottom: 6px; }
.bigc { display: flex; flex-direction: column; align-items: center; text-align: center; white-space: nowrap; line-height: 17px; padding-top: 4px; }
.bigi { width: 26px; height: 26px; margin-bottom: 8px; flex: none; }
.bigi.wide { width: 28px; }
.rc3 { display: flex; flex-direction: column; gap: 9px; padding-top: 0; }
.rc3 .ic { margin: 0; }
.rlabel { text-align: center; line-height: 18px; color: #333; }
.rlabel.low { line-height: 21px; padding-top: 1px; }

/* combos */
.combos { height: 29px; flex: none; display: flex; gap: 6px; padding: 4px 3px 2px; background: #c8cacd; }
.combo { width: 99px; height: 23px; background: #fff; border: 1px solid #ccc; display: flex; align-items: center; padding-left: 3px; padding-right: 6px; }
.combo .caret { margin-left: auto; }
.clip { width: 82px; overflow: hidden; white-space: nowrap; }

/* main */
.main { flex: 1; display: flex; background: #f0f0f0; min-height: 0; border-top: 1px solid #c8cacd; }
.nav { width: 208px; flex: none; background: #fff; border-left: 1px solid #bbb; border-right: 1px solid #bbb; display: flex; flex-direction: column; }
.nav-head { height: 20px; background: #f0f0f0; border-bottom: 1px solid #ccc; color: #777; padding-left: 8px; line-height: 19px; }
.nav-tools { height: 30px; background: #f0f0f0; border-bottom: 1px solid #ccc; display: flex; align-items: center; padding: 0 2px 0 6px; gap: 4px; }
.pin { width: 13px; height: 13px; fill: #3a86d8; margin-right: auto; }
.nav-sq { width: 25px; height: 24px; border: 1px solid #7db7f5; border-radius: 3px; display: flex; align-items: center; justify-content: center; background: #f4f8fd; }
.nsq { width: 15px; height: 13px; fill: none; stroke: #3a86d8; }
.nsq-f { fill: #3a86d8; stroke: none; }
.tree { padding-top: 4px; flex: 1; }
.tg { height: 24px; display: flex; align-items: center; padding-left: 5px; }
.fo { width: 15px; height: 13px; margin-right: 4px; flex: none; }
.ts { height: 24px; display: flex; align-items: center; margin-left: 40px; padding-left: 4px; }
.ts .ic { margin-right: 6px; }
.ts.sel { width: 104px; height: 21px; margin-top: 1px; margin-bottom: 2px; background: #c5d8ee; }
.mid { width: 285px; margin-left: 4px; flex: none; display: flex; flex-direction: column; gap: 4px; }
.split { width: 5px; flex: none; background: #e4e4e4; }
.panel { display: flex; flex-direction: column; background: #f0f0f0; border-left: 1px solid #aaa; border-right: 1px solid #aaa; }
.p1 { height: 398px; }
.p2 { flex: 1; min-height: 0; }
.p-head { height: 11px; background: #d2d3d6; display: flex; justify-content: flex-end; padding-right: 2px; flex: none; }
.p-x { color: #999; font: bold 12px/10px "Liberation Sans", sans-serif; }
.p-tabs { height: 22px; display: flex; border-bottom: 1px solid #ccc; flex: none; }
.p-tab { width: 65px; text-align: center; line-height: 21px; background: #dfdfdf; color: #888; border-right: 1px solid #ccc; }
.p-tab.on { background: #f0f0f0; color: #222; }
.p-tools { height: 31px; display: flex; align-items: center; padding-left: 4px; flex: none; }
.p-tools .ic { margin-right: 3px; }
.p-tools .caret { margin-left: 9px; }
.pt.t1 { width: 48px; } .pt.t2 { width: 24px; }
.p-tools .i2 { margin-left: 9px; } .p-tools .i3 { margin-left: 10px; } .p-tools .i4 { margin-left: 16px; }
.dwg { flex: 1; min-height: 0; display: flex; background: #fff; }
.dwg-list { width: 268px; flex: none; overflow: hidden; border-right: 1px solid #ccc; }
.dh { height: 25px; display: grid; grid-template-columns: 171px 36px 61px; background: #f0f0f0; text-align: center; line-height: 25px; color: #444; }
.dh span { border-right: 1px solid #ddd; }
.dh-n { background: #7db7f5; color: #fff; font-weight: bold; }
.dg { height: 21px; display: flex; align-items: center; border-bottom: 1px solid #d8d8d8; padding-left: 3px; white-space: nowrap; }
.box { width: 12px; height: 12px; border: 1px solid #777; border-radius: 2px; margin-right: 7px; font: 12px/10px "Liberation Sans", sans-serif; text-align: center; color: #444; flex: none; }
.dr { height: 21px; display: grid; grid-template-columns: 171px 36px 61px; border-bottom: 1px solid #d8d8d8; align-items: stretch; white-space: nowrap; line-height: 20px; }
.dn { padding-left: 31px; border-right: 1px solid #d8d8d8; background: linear-gradient(#ccc, #ccc) 8px 0/1px 100% no-repeat, linear-gradient(#ccc, #ccc) 8px 50%/17px 1px no-repeat; }
.dl { border-right: 1px solid #d8d8d8; display: flex; align-items: center; justify-content: center; }
.lk { width: 12px; height: 14px; fill: none; }
.df { padding-left: 4px; overflow: hidden; }
.dr.act { background: #d4e8fc; }
.dr.act .dn { outline: 2px solid #777; outline-offset: -2px; }
.vscroll { width: 15px; display: flex; flex-direction: column; align-items: center; background: #fff; }
.vscroll .up { width: 0; height: 0; margin-top: 3px; border: 4px solid transparent; border-bottom: 5px solid #444; border-top: 0; }
.vscroll .thumb { width: 8px; height: 118px; margin-top: 3px; background: #ccc; border-radius: 4px; }
.vscroll .down { width: 0; height: 0; margin-top: auto; margin-bottom: 3px; border: 4px solid transparent; border-top: 5px solid #444; border-bottom: 0; }
.props { display: flex; flex-direction: column; }
.prh, .pr { display: grid; grid-template-columns: 22px 101px 119px 41px; height: 21px; line-height: 22px; white-space: nowrap; border-bottom: 1px solid #d4d4d4; }
.prh { text-align: center; color: #444; background: #f0f0f0; }
.prh span { border-right: 1px solid #d4d4d4; }
.pr { background: #fff; }
.pr > span { border-right: 1px solid #d4d4d4; }
.pi { text-align: center; background: #f5f7f9; font-size: 13px; color: #333; }
.pk { padding-left: 3px; display: flex; align-items: center; }
.pk .box { margin: 0 7px 0 0; }
.lnk { color: #2a6fe0; }
.pv { padding-left: 3px; }
.pv.ro { background: #e9e9e9; color: #888; }
.rb { font-size: 9px; vertical-align: 3px; }
.pc { display: flex; align-items: center; justify-content: center; }
.chk { width: 14px; height: 14px; border: 1px solid #888; border-radius: 2px; background: #fff; display: block; margin-right: 3px; }

/* canvas */
.canvas { flex: 1; min-width: 0; background: #000; position: relative; overflow: hidden; }
.cad { display: block; }
.paper { fill: #666; }
.void { fill: #000; }
.wall rect { fill: #2adf2a; stroke: #16b816; }
.blue { fill: #3c3ca4; }
.teal rect { fill: #1b8a80; }
.hatch { fill: url(#hatch); }
.hl { stroke: #e020f0; stroke-width: 1; fill: none; }
.col rect { fill: #8800ff; stroke: #16c816; }
.colb rect { fill: #5000ff; }
.wl { stroke: #fff; stroke-width: 2; fill: none; }
.pk-l { stroke: #ff8a80; stroke-width: 1; fill: none; }
.wd { stroke: #fff; stroke-width: 1.500; fill: none; }
.ybar { stroke: #ffff20; stroke-width: 3; fill: none; }
.rbar { stroke: #f01010; stroke-width: 1.200; fill: none; }
.ubar { stroke: #ffff20; stroke-width: 3; fill: none; }
.rred { stroke: #f01010; stroke-width: 2; fill: none; }
.mg { stroke: #ff30d8; stroke-width: 3; fill: none; }
.red { stroke: #e81010; stroke-width: 1.200; fill: none; }
.grn { stroke: #10d010; stroke-width: 1; fill: none; }
.grn2 { stroke: #10d010; stroke-width: 1.300; fill: none; }
.gbox { stroke: #10d010; stroke-width: 1.400; fill: none; }
.yh { stroke: #ffff20; stroke-width: 3; fill: none; }
.rn { stroke: #f01010; stroke-width: 1.200; fill: none; }
.wt { stroke: #fff; stroke-width: 1.500; fill: none; }
.wt2 { stroke: #ddd; stroke-width: 1.500; fill: none; }
.ct { font-family: "Liberation Sans", sans-serif; font-size: 38px; fill: none; stroke-width: .55; }
.ct text { font-family: "Liberation Sans", sans-serif; }
.wtxt { font-size: 20px; stroke: #fff; stroke-width: 1; }
.teal-t { stroke: #0b9a9a; }
.blue-t { stroke: #1a5fc8; }
.green-t { stroke: #12e012; }
.green-s { stroke: #12e012; font-size: 30px; }
.ax-g { stroke: #00d000; stroke-width: 4; }
.ax-gf { fill: #00d000; }
.ax-r { stroke: #f00000; stroke-width: 4; }
.ax-rf { fill: #f00000; }
.ax-b { fill: #0000b0; }
.ax-yt { fill: #10c010; font: 14px "Liberation Sans", sans-serif; text-anchor: middle; }
.ax-xt { fill: #f00000; font: 16px "Liberation Sans", sans-serif; }
.viewbar { position: absolute; right: 4px; top: 3px; width: 32px; height: 227px; background: #a4a8ae; display: flex; flex-direction: column; align-items: center; padding-top: 10px; border-bottom: 1px solid #ddd; }
.vb { width: 24px; height: 23px; flex: none; fill: none; }
.v1 { height: 22px; margin-bottom: 8px; }
.v2 { margin-bottom: 6px; }
.v5 { height: 22px; }
.viewbar .caret { margin: 6px 0; border-top-color: #444; flex: none; }
.viewbar .c2 { margin: 7px 0 6px; }
.vsep { width: 24px; height: 1px; margin: 5px 0; border: 0; background: #777; flex: none; }

/* dialog */
.dlg { position: absolute; left: 710px; top: 305px; width: 482px; height: 340px; background: #f0f0f0; box-shadow: 0 1px 5px rgba(0,0,0,.5); display: flex; flex-direction: column; }
.dlg-title { height: 27px; flex: none; background: #2e80e0; color: #fff; display: flex; align-items: center; padding: 0 10px 0 8px; }
.dlg-x { width: 9px; height: 9px; margin-left: auto; fill: none; stroke: #fff; stroke-width: 1.300; }
.dlg-opts { height: 34px; flex: none; display: flex; align-items: center; padding: 6px 0 0 13px; }
.op { margin: 0 7px; white-space: nowrap; }
.rd { width: 14px; height: 14px; border: 1px solid #aaa; border-radius: 50%; background: #fff; flex: none; display: flex; align-items: center; justify-content: center; }
.rd.on::after { content: ""; width: 6px; height: 6px; border-radius: 50%; background: #4a9cf0; }
.cb { width: 14px; height: 14px; border-radius: 2px; background: #5da4f0; flex: none; display: flex; align-items: center; justify-content: center; }
.cb::after { content: ""; width: 8px; height: 4px; border: solid #fff; border-width: 0 0 2px 2px; transform: rotate(-45deg); margin-top: -2px; }
.dlg-table { margin: 0 12px; height: 235px; flex: none; background: #fff; border: 1px solid #ccc; }
.dt-h { display: grid; grid-template-columns: 150px 90px 145px; height: 20px; background: #f0f0f0; text-align: center; line-height: 19px; color: #444; }
.dt-h span { border-right: 1px solid #ccc; border-bottom: 1px solid #ccc; }
.dt-r { display: grid; grid-template-columns: 150px 90px 145px; height: 19px; line-height: 19px; white-space: nowrap; color: #222; }
.dt-r span { padding-left: 3px; }
.dlg-foot { flex: 1; display: flex; align-items: center; padding: 0 12px 6px 13px; }
.dlg-foot .cb, .dlg-foot .op { margin-top: -2px; }
.refresh { margin-left: auto; width: 80px; height: 26px; border: 0; border-radius: 3px; background: #2e80e0; color: #fff; font: inherit; padding: 0; }
.scribble { position: absolute; left: -10px; top: -10px; width: 500px; height: 360px; fill: none; stroke: #4040c8; stroke-width: 9; pointer-events: none; }
.grip { position: absolute; right: 4px; bottom: 4px; width: 6px; height: 9px; fill: #888; }

/* status */
.status { height: 30px; flex: none; background: #dddddf; border-bottom: 1px solid #fff; display: flex; align-items: center; padding: 1px 0 0 2px; white-space: nowrap; color: #333; }
.st-cells { display: grid; grid-template-columns: 263px 83px 133px 103px 103px; flex: none; }
.st-xy { word-spacing: 2.300px; }
.st-b { height: 24px; border: 1px solid #aaa; border-radius: 1px; background: #dcdcde; display: flex; align-items: center; justify-content: center; margin-right: 3.500px; flex: none; color: #333; }
.st-b .caret { margin-left: 4px; }
.st-b.on { background: #fff; border-color: #2e8ce8; }
.st-b.off { opacity: .6; }
.s25 { width: 25px; } .s36 { width: 36px; } .s73 { width: 73px; } .s60 { width: 60px; }
.si { width: 14px; height: 14px; fill: none; stroke: #444; flex: none; }
.si-o { fill: #f0a050; stroke: none; }
.si-d { fill: #444; stroke: none; }
.st-msg { margin-left: 3px; }
.st-fps { margin-left: auto; width: 80px; }

/* taskbar */
.taskbar { height: 40px; flex: none; background: #0d0f09; display: flex; }
.tb-start { width: 48px; display: flex; align-items: center; justify-content: center; }
.winlogo { width: 16px; height: 16px; fill: #fff; }
.tb-search { width: 344px; background: #f0f0f0; display: flex; align-items: center; padding-left: 9px; }
.cortana { width: 20px; height: 20px; border: 3px solid #222; border-radius: 50%; margin-right: 11px; flex: none; }
.tb-ph { font-size: 14px; color: #333; }
.mic { width: 12px; height: 20px; margin-left: auto; margin-right: 15px; fill: none; stroke: #444; }
.tb-view { width: 48px; display: flex; align-items: center; justify-content: center; }
.tv { width: 16px; height: 16px; fill: none; stroke: #fff; }
.tb-app { width: 49.500px; display: flex; align-items: center; justify-content: center; border-bottom: 2px solid transparent; background-clip: padding-box; position: relative; }
.tb-app.ul::after { content: ""; position: absolute; left: 5px; right: 5px; bottom: -2px; height: 2px; background: #6fb0e8; }
.tb-app.act { background: #3a3a38; }
.g-ic { color: #1e8fe8; font: italic bold 28px/30px "Liberation Sans", sans-serif; }
.cad-ic { width: 24px; height: 28px; background: #2a5fa8; color: #d8e8ff; font: bold 9px/28px "Liberation Sans", sans-serif; text-align: center; border: 1px solid #888; }
.t-ic { width: 24px; height: 28px; border-radius: 4px; background: linear-gradient(#52bcf8, #1475e0); color: #fff; font: bold 22px/28px "Liberation Sans", sans-serif; text-align: center; }
.robot { width: 22px; height: 24px; }
.e-ic { color: #1a8fe8; font: bold 32px/32px "Liberation Sans", sans-serif; }
.tray { margin-left: auto; display: flex; align-items: center; color: #fff; padding-right: 6px; }
.tr { height: 17px; flex: none; fill: none; stroke: #fff; }
.t36 { width: 36px; } .t34 { width: 34px; } .t16 { width: 16px; } .t52 { width: 52px; height: 20px; }
.chev { height: 8px; }
.tr-zh { width: 12px; font-size: 12px; text-align: center; }
.tr-s { width: 44px; display: flex; justify-content: center; }
.tr-s b { width: 15px; height: 22px; background: #e8481c; border-radius: 3px; text-align: center; font: bold 16px/22px "Liberation Sans", sans-serif; }
.tr-time { width: 64px; display: flex; flex-direction: column; align-items: center; line-height: 20px; white-space: nowrap; }
```
